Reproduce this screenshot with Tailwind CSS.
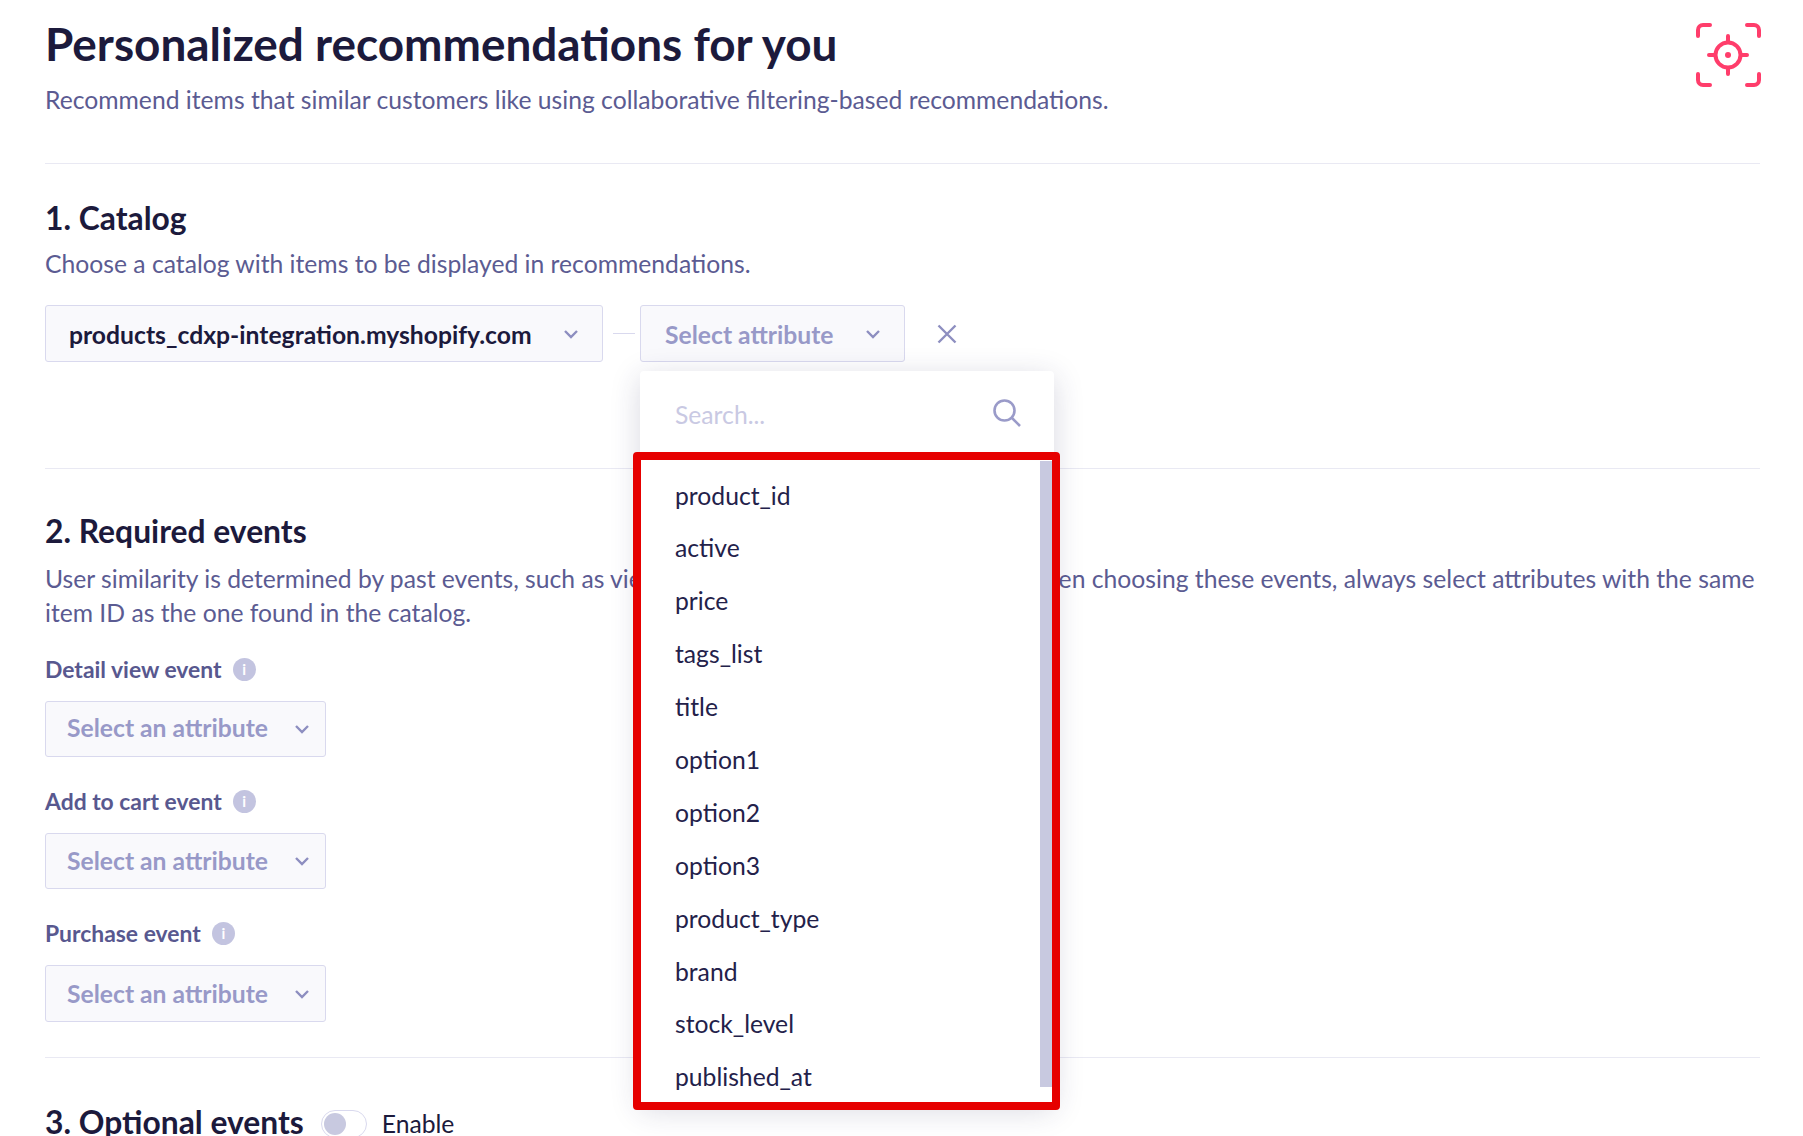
<!DOCTYPE html>
<html lang="en">
<head>
  <meta charset="UTF-8" />
  <title>Personalized recommendations</title>
  <script src="https://cdn.jsdelivr.net/npm/@tailwindcss/browser@4"></script>
</head>
<body class="bg-white font-['Lato',sans-serif] text-[#1c1a3c] h-[1136px] overflow-hidden">
  <main class="relative pl-[45px] pr-[43px] pt-[16px]">
    <!-- Header -->
    <svg class="absolute left-[1696px] top-[23px] text-[#ff3d6b]" width="65" height="64" viewBox="0 0 65 64" fill="none" stroke="currentColor" stroke-width="4" stroke-linecap="round">
      <path d="M2 13V7a5 5 0 0 1 5-5h7M51 2h7a5 5 0 0 1 5 5v6M2 51v6a5 5 0 0 0 5 5h7M51 62h7a5 5 0 0 0 5-5v-6" />
      <circle cx="32" cy="32" r="12.5" />
      <path d="M32 13v6M32 45v6M13 32h6M45 32h6" />
      <circle cx="32" cy="32" r="3" fill="currentColor" stroke="none" />
    </svg>
    <h1 class="text-[45.9px] leading-[56px] font-bold">Personalized recommendations for you</h1>
    <p class="mt-[11px] text-[24.7px] leading-[34px] text-[#5b5b92]">Recommend items that similar customers like using collaborative filtering-based recommendations.</p>
    <div class="mt-[46px] border-t border-[#e9e9f3]"></div>

    <!-- 1. Catalog -->
    <h2 class="mt-[34px] text-[31.8px] leading-[40px] font-bold">1. Catalog</h2>
    <p class="mt-[9px] text-[24.7px] leading-[34px] text-[#5b5b92]">Choose a catalog with items to be displayed in recommendations.</p>
    <div class="mt-[24px] flex items-center h-[57px]">
      <div class="w-[558px] h-full flex items-center justify-between pl-[23px] pr-[23px] pt-[3px] bg-[#f9f9fc] border border-[#d9d9ee] rounded-[3px]">
        <span class="text-[24.7px] font-bold">products_cdxp-integration.myshopify.com</span>
        <svg class="mb-[3px]" width="16" height="10" viewBox="0 0 16 10" fill="none" stroke="#8d8ec0" stroke-width="2.4"><path d="M2 2l6 6 6-6" /></svg>
      </div>
      <div class="w-[22px] ml-[10px] mr-[5px] border-t border-[#d9d9ee]"></div>
      <div class="relative w-[265px] h-full">
        <div class="h-full flex items-center justify-between pl-[24px] pr-[23px] pt-[3px] bg-[#f9f9fc] border border-[#d9d9ee] rounded-[3px]">
          <span class="text-[24.7px] font-bold text-[#9899c8]">Select attribute</span>
          <svg class="mb-[3px]" width="16" height="10" viewBox="0 0 16 10" fill="none" stroke="#8d8ec0" stroke-width="2.4"><path d="M2 2l6 6 6-6" /></svg>
        </div>
        <!-- Dropdown -->
        <div class="absolute z-10 left-0 top-[66px] w-[414px] h-[733px] bg-white rounded-[4px] shadow-[0_6px_30px_rgba(40,40,90,0.18)]">
          <div class="relative h-[90px] pl-[35px] pt-[26px]">
            <span class="block text-[24.7px] leading-[36px] text-[#c9c9e3]">Search...</span>
            <svg class="absolute left-[353px] top-[28px]" width="28" height="28" viewBox="0 0 28 28" fill="none" stroke="#9a9bc9" stroke-width="2.6"><circle cx="11.5" cy="11.5" r="10" /><path d="M18.5 18.5l8.5 8.5" /></svg>
          </div>
          <ul class="pl-[35px] pt-[8.5px] text-[24.7px] text-[#23214a]">
            <li class="h-[52.9px] leading-[52.9px]">product_id</li>
            <li class="h-[52.9px] leading-[52.9px]">active</li>
            <li class="h-[52.9px] leading-[52.9px]">price</li>
            <li class="h-[52.9px] leading-[52.9px]">tags_list</li>
            <li class="h-[52.9px] leading-[52.9px]">title</li>
            <li class="h-[52.9px] leading-[52.9px]">option1</li>
            <li class="h-[52.9px] leading-[52.9px]">option2</li>
            <li class="h-[52.9px] leading-[52.9px]">option3</li>
            <li class="h-[52.9px] leading-[52.9px]">product_type</li>
            <li class="h-[52.9px] leading-[52.9px]">brand</li>
            <li class="h-[52.9px] leading-[52.9px]">stock_level</li>
            <li class="h-[52.9px] leading-[52.9px]">published_at</li>
          </ul>
          <div class="absolute left-[400px] top-[90px] w-[12px] h-[626px] bg-[#c8c9e0]"></div>
          <!-- Red highlight -->
          <div class="absolute left-[-7px] top-[81px] w-[427px] h-[658px] border-[8px] border-[#e60000] rounded-[4px]"></div>
        </div>
      </div>
      <svg class="ml-[32px]" width="20" height="20" viewBox="0 0 20 20" fill="none" stroke="#8d8ec0" stroke-width="2.4"><path d="M1.5 1.5l17 17M18.5 1.5l-17 17" /></svg>
    </div>
    <div class="mt-[106px] border-t border-[#e9e9f3]"></div>

    <!-- 2. Required events -->
    <h2 class="mt-[42px] text-[31.8px] leading-[40px] font-bold">2. Required events</h2>
    <p class="mt-[11px] text-[24.7px] leading-[34px] text-[#5b5b92]">User similarity is determined by past events, such as viewing, adding to cart or purchasing. When choosing these events, always select attributes with the same item ID as the one found in the catalog.</p>

    <div class="mt-[24px] flex items-center gap-[11px] h-[30px]">
      <span class="text-[22.9px] font-bold text-[#58588f]">Detail view event</span>
      <span class="w-[23px] h-[23px] rounded-full bg-[#c3c4e0] text-white text-[15px] font-bold flex items-center justify-center">i</span>
    </div>
    <div class="mt-[17px] w-[281px] h-[56px] flex items-center justify-between pl-[21px] pr-[15px] pb-[2px] bg-[#f9f9fc] border border-[#d9d9ee] rounded-[3px]">
      <span class="text-[24.7px] font-bold text-[#9899c8]">Select an attribute</span>
      <svg class="mt-[2px]" width="16" height="10" viewBox="0 0 16 10" fill="none" stroke="#8d8ec0" stroke-width="2.4"><path d="M2 2l6 6 6-6" /></svg>
    </div>

    <div class="mt-[29px] flex items-center gap-[11px] h-[30px]">
      <span class="text-[22.9px] font-bold text-[#58588f]">Add to cart event</span>
      <span class="w-[23px] h-[23px] rounded-full bg-[#c3c4e0] text-white text-[15px] font-bold flex items-center justify-center">i</span>
    </div>
    <div class="mt-[17px] w-[281px] h-[56px] flex items-center justify-between pl-[21px] pr-[15px] bg-[#f9f9fc] border border-[#d9d9ee] rounded-[3px]">
      <span class="text-[24.7px] font-bold text-[#9899c8]">Select an attribute</span>
      <svg width="16" height="10" viewBox="0 0 16 10" fill="none" stroke="#8d8ec0" stroke-width="2.4"><path d="M2 2l6 6 6-6" /></svg>
    </div>

    <div class="mt-[29px] flex items-center gap-[11px] h-[30px]">
      <span class="text-[22.9px] font-bold text-[#58588f]">Purchase event</span>
      <span class="w-[23px] h-[23px] rounded-full bg-[#c3c4e0] text-white text-[15px] font-bold flex items-center justify-center">i</span>
    </div>
    <div class="mt-[17px] w-[281px] h-[57px] flex items-center justify-between pl-[21px] pr-[15px] bg-[#f9f9fc] border border-[#d9d9ee] rounded-[3px]">
      <span class="text-[24.7px] font-bold text-[#9899c8]">Select an attribute</span>
      <svg width="16" height="10" viewBox="0 0 16 10" fill="none" stroke="#8d8ec0" stroke-width="2.4"><path d="M2 2l6 6 6-6" /></svg>
    </div>
    <div class="mt-[35px] border-t border-[#e9e9f3]"></div>

    <!-- 3. Optional events -->
    <div class="mt-[44px] flex items-center h-[40px]">
      <h2 class="text-[31.8px] leading-[40px] font-bold">3. Optional events</h2>
      <div class="ml-[17px] mt-[3px] w-[46px] h-[28px] p-[2px] rounded-full border border-[#d9d9ee] bg-white">
        <div class="w-[22px] h-[22px] rounded-full bg-[#c8c9e0]"></div>
      </div>
      <span class="ml-[15px] mt-[4px] text-[24.7px]">Enable</span>
    </div>
  </main>
</body>
</html>
